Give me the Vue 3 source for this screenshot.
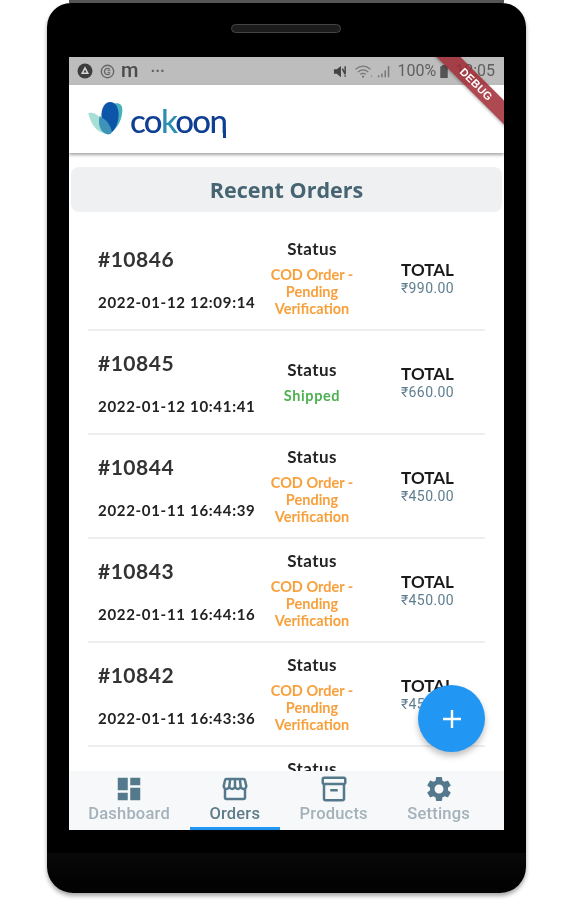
<script setup>
const orders = [
  { id: '#10846', date: '2022-01-12 12:09:14', total: '₹990.00', cod: true },
  { id: '#10845', date: '2022-01-12 10:41:41', total: '₹660.00', cod: false },
  { id: '#10844', date: '2022-01-11 16:44:39', total: '₹450.00', cod: true },
  { id: '#10843', date: '2022-01-11 16:44:16', total: '₹450.00', cod: true },
  { id: '#10842', date: '2022-01-11 16:43:36', total: '₹450.00', cod: true },
  { id: '#10841', date: '2022-01-11 16:40:12', total: '₹450.00', cod: true }
]
const tabs = [
  { label: 'Dashboard', active: false, d: 'M3 13h8V3H3v10zm0 8h8v-6H3v6zm10 0h8V11h-8v10zm0-18v6h8V3h-8z' },
  { label: 'Orders', active: true, d: 'M21.9 8.89l-1.05-4.37c-.22-.9-1-1.52-1.91-1.52H5.05c-.9 0-1.69.63-1.9 1.52L2.1 8.89c-.24 1.02-.02 2.06.62 2.88.08.11.19.19.28.29V19c0 1.1.9 2 2 2h14c1.1 0 2-.9 2-2v-6.94c.09-.09.2-.18.28-.28.64-.82.87-1.87.62-2.89zm-2.99-3.9l1.05 4.37c.1.42.01.84-.25 1.17-.14.18-.44.47-.94.47-.61 0-1.14-.49-1.21-1.14L16.98 5l1.93-.01zM13 5h1.96l.54 4.52c.05.39-.07.78-.33 1.07-.22.26-.54.41-.95.41-.67 0-1.22-.59-1.22-1.31V5zM8.49 9.52L9.04 5H11v4.69c0 .72-.55 1.31-1.29 1.31-.34 0-.65-.15-.89-.41-.25-.29-.37-.68-.33-1.07zm-4.45-.16L5.05 5h1.97l-.58 4.86c-.08.65-.6 1.14-1.21 1.14-.49 0-.8-.29-.93-.47-.27-.32-.36-.75-.26-1.17zM5 19v-6.03c.08.01.15.03.23.03.87 0 1.66-.36 2.24-.95.6.6 1.4.95 2.31.95.87 0 1.65-.36 2.23-.93.59.57 1.39.93 2.29.93.84 0 1.64-.35 2.24-.95.58.59 1.37.95 2.24.95.08 0 .15-.02.23-.03V19H5z' },
  { label: 'Products', active: false, d: 'M20 2H4c-1 0-2 .9-2 2v3.01c0 .72.43 1.34 1 1.69V20c0 1.1 1.1 2 2 2h14c.9 0 2-.9 2-2V8.7c.57-.35 1-.97 1-1.69V4c0-1.1-1-2-2-2zm-1 18H5V9h14v11zm1-13H4V4h16v3zM9 12h6v2H9z' },
  { label: 'Settings', active: false, d: 'M19.14 12.94c.04-.3.06-.61.06-.94 0-.32-.02-.64-.07-.94l2.03-1.58c.18-.14.23-.41.12-.61l-1.92-3.32c-.12-.22-.37-.29-.59-.22l-2.39.96c-.5-.38-1.03-.7-1.62-.94l-.36-2.54c-.04-.24-.24-.41-.48-.41h-3.84c-.24 0-.43.17-.47.41l-.36 2.54c-.59.24-1.13.57-1.62.94l-2.39-.96c-.22-.08-.47 0-.59.22L2.74 8.87c-.12.21-.08.47.12.61l2.03 1.58c-.05.3-.09.63-.09.94s.02.64.07.94l-2.03 1.58c-.18.14-.23.41-.12.61l1.92 3.32c.12.22.37.29.59.22l2.39-.96c.5.38 1.03.7 1.62.94l.36 2.54c.05.24.24.41.48.41h3.84c.24 0 .44-.17.47-.41l.36-2.54c.59-.24 1.13-.56 1.62-.94l2.39.96c.22.08.47 0 .59-.22l1.92-3.32c.12-.22.07-.47-.12-.61l-2.01-1.58zM12 15.6c-1.98 0-3.6-1.62-3.6-3.6s1.62-3.6 3.6-3.6 3.6 1.62 3.6 3.6-1.62 3.6-3.6 3.6z' }
]
</script>

<template>
  <div class="page">
    <div class="phone">
      <div class="speaker"></div>
      <div class="screen">
        <div class="statusbar">
          <div class="st-left">
            <svg class="st-icon" viewBox="0 0 16 16" width="16" height="16">
              <circle cx="8" cy="8" r="7.5" fill="#3d3d3d" />
              <path d="M8 3.2 12 11H4z" fill="#d8d8d8" />
              <path d="M8 6.4 9.6 9.6H6.4z" fill="#3d3d3d" />
            </svg>
            <svg class="st-icon" viewBox="0 0 16 16" width="15" height="15">
              <circle cx="8" cy="8" r="6.6" fill="none" stroke="#666" stroke-width="1.5" />
              <path d="M10.6 5.6a3.4 3.4 0 1 0 0 4.8" fill="none" stroke="#666" stroke-width="1.4" />
              <path d="M8 7h3M8 9h3" stroke="#666" stroke-width="1" />
            </svg>
            <span class="st-m">m</span>
            <span class="st-dots">···</span>
          </div>
          <div class="st-right">
            <svg viewBox="0 0 16 16" width="15" height="15">
              <path d="M1 5.5h3L8.5 2v12L4 10.5H1z" fill="#444" />
              <path d="M10 5l3 6M13 2.5v7.5M13 12v1.5" stroke="#444" stroke-width="1.6" />
            </svg>
            <svg class="st-wifi" viewBox="0 0 20 16" width="20" height="15">
              <path d="M1 5.5c5-4 11-4 16 0M3.5 8.5c3.5-2.8 7.5-2.8 11 0M6 11c2-1.4 4-1.4 6 0" fill="none" stroke="#777" stroke-width="1.3" />
              <circle cx="9" cy="13.5" r="1.2" fill="#777" />
              <circle cx="18" cy="13" r=".8" fill="#888" />
            </svg>
            <svg viewBox="0 0 16 16" width="15" height="15">
              <path d="M1 12h1.6v2H1zM4.5 10h1.6v4H4.5zM8 7h1.6v7H8zM11.5 2h1.6v12h-1.6z" fill="#777" />
            </svg>
            <span class="st-text">100%</span>
            <svg viewBox="0 0 10 16" width="10" height="15">
              <path d="M3 1h4v1.5h2V15H1V2.5h2z" fill="#555" />
            </svg>
            <span class="st-text st-time">12:05</span>
          </div>
        </div>

        <div class="banner">DEBUG</div>

        <header class="appbar">
          <div class="logo">
            <svg class="logo-mark" viewBox="0 0 46 36" width="44" height="34">
              <path d="M1 13c7-2 12 3 15 10 2 5 4 9 7 11C12 36 4 26 1 13z" fill="#a7dfd6" />
              <path d="M27 4c7-4 11 0 10 8-1 10-6 18-13 22 6-8 8-20 3-30z" fill="#45b1bb" />
              <path d="M24 1c7 0 10 8 9 17-1 7-4 13-7 15-5-3-11-9-11-18 0-8 4-14 9-14z" fill="#0d55a8" />
              <path d="M13 16c6 3 12 9 13 17-1 2-3 3-6 2-6-2-9-10-7-19z" fill="#3d93b8" />
            </svg>
            <span class="logo-text">co<span class="logo-k">k</span>oo<span class="logo-n">n</span></span>
          </div>
        </header>

        <div class="title-card">Recent Orders</div>

        <div class="list">
          <div v-for="o in orders" :key="o.id" class="row">
            <div class="col-id">
              <div class="order-id">{{ o.id }}</div>
              <div class="order-date">{{ o.date }}</div>
            </div>
            <div class="col-status">
              <div class="status-label">Status</div>
              <div v-if="o.cod" class="status-value cod">COD Order -<br />Pending<br />Verification</div>
              <div v-else class="status-value shipped">Shipped</div>
            </div>
            <div class="col-total">
              <div class="total-label">TOTAL</div>
              <div class="total-value">{{ o.total }}</div>
            </div>
          </div>
        </div>

        <nav class="tabs">
          <div v-for="t in tabs" :key="t.label" class="tab" :class="{ active: t.active }">
            <svg viewBox="0 0 24 24" width="30" height="30"><path :d="t.d" fill="#55798c" /></svg>
            <span class="tab-label">{{ t.label }}</span>
          </div>
        </nav>

        <button class="fab" aria-label="Add">
          <svg viewBox="0 0 24 24" width="24" height="24"><path d="M12 3v18M3 12h18" stroke="#fff" stroke-width="2.4" /></svg>
        </button>
      </div>
    </div>
  </div>
</template>

<style>
html, body { margin: 0; background: #fff; }
</style>

<style scoped>
.page {
  width: 571px;
  height: 900px;
  background: #fff;
  overflow: hidden;
  font-family: "Lato", "Liberation Sans", sans-serif;
  padding: 3px 0 0 47px;
  box-sizing: border-box;
}
.phone {
  width: 479px;
  height: 890px;
  box-sizing: border-box;
  padding: 54px 22px 63px;
  background: linear-gradient(#000 0 850px, #090909 850px, #020202 880px);
  border-radius: 24px 24px 26px 26px;
  box-shadow: 0 3px 4px rgba(0,0,0,.35);
  position: relative;
  filter: blur(0.45px);
}
.phone::before {
  content: "";
  position: absolute;
  left: 22px;
  right: 22px;
  top: -3px;
  height: 3px;
  background: #555;
}
.speaker {
  position: absolute;
  left: 184px;
  top: 21px;
  width: 110px;
  height: 9px;
  border-radius: 5px;
  background: #1c1c1c;
  border: 1px solid #444;
  box-sizing: border-box;
}
.screen {
  position: relative;
  height: 773px;
  background: #fff;
  overflow: hidden;
  display: flex;
  flex-direction: column;
}
.statusbar {
  flex: none;
  height: 28px;
  background: #bdbdbd;
  display: flex;
  align-items: center;
  justify-content: space-between;
  padding: 0 9px 0 8px;
}
.st-left, .st-right { display: flex; align-items: center; }
.st-left { gap: 7px; }
.st-m { font: 500 20px/1 "Roboto", sans-serif; color: #4a4a4a; margin: -2px 0 0 -1px; }
.st-dots { font: 700 16px/1 "Roboto", sans-serif; color: #666; margin-left: 5px; }
.st-right { gap: 3px; }
.st-wifi { margin-left: 3px; }
.st-text { font: 400 16px/1 "Roboto", sans-serif; color: #5f5f5f; margin-left: 2px; }
.st-time { margin-left: 3px; }
.banner {
  position: absolute;
  left: 347px;
  top: 19px;
  width: 120px;
  height: 17px;
  transform: rotate(45deg);
  background: rgba(160, 40, 50, .85);
  color: #fff;
  font: 700 11px/17px "Liberation Sans", sans-serif;
  text-align: center;
  letter-spacing: .3px;
  box-shadow: 0 1px 3px rgba(0,0,0,.3);
  z-index: 3;
}
.appbar {
  flex: none;
  height: 68px;
  box-sizing: border-box;
  padding-left: 18px;
  box-shadow: 0 2px 3px rgba(0,0,0,.35);
  display: flex;
  align-items: center;
  position: relative;
  z-index: 1;
}
.logo { display: flex; align-items: flex-end; margin-top: -2px; }
.logo-mark { display: block; margin-right: -1px; }
.logo-text {
  font: 500 33px/30px "Lato", sans-serif;
  color: #0f3f92;
  letter-spacing: -1.7px;
}
.logo-k { color: #2a8fb0; }
.logo-n { position: relative; }
.logo-n::after {
  content: "";
  position: absolute;
  right: .5px;
  bottom: 2px;
  width: 2.5px;
  height: 8px;
  background: #0f3f92;
}
.title-card {
  flex: none;
  margin: 14px 2px 15px;
  height: 45px;
  border-radius: 8px;
  background: #eef0f2;
  color: #476472;
  font: 700 21.5px/45px "Open Sans", sans-serif;
  text-align: center;
}
.list {
  flex: 1;
  min-height: 0;
  overflow: hidden;
  padding: 0 19px;
}
.row {
  height: 104px;
  box-sizing: border-box;
  border-bottom: 2px solid #eeeeee;
  display: flex;
  align-items: center;
  color: #1f1f1f;
}
.col-id { width: 167px; box-sizing: border-box; padding-left: 10px; flex: none; }
.order-id { font-size: 21px; line-height: 26px; font-weight: 700; letter-spacing: .5px; color: #333; }
.order-date { font-size: 15px; line-height: 18px; font-weight: 700; margin-top: 21px; letter-spacing: .69px; white-space: nowrap; color: #222; }
.col-status { width: 114px; padding-top: 1px; text-align: center; flex: none; }
.status-label { font-size: 17px; line-height: 18px; font-weight: 700; letter-spacing: .4px; color: #222; margin-bottom: 8px; }
.status-value { font-size: 14.5px; line-height: 17px; font-weight: 700; }
.cod { color: #f7a03c; }
.shipped { color: #4cb050; letter-spacing: .6px; }
.col-total { width: 115px; padding-top: 1px; text-align: center; flex: none; margin-left: 1px; }
.total-label { font-size: 17px; line-height: 18px; font-weight: 700; color: #1a1a1a; }
.total-value { font: 400 14px/18px "Roboto", sans-serif; color: #5f7f90; letter-spacing: .4px; }
.tabs {
  flex: none;
  height: 59px;
  background: #f7f8f9;
  display: flex;
  position: relative;
  z-index: 1;
}
.tab {
  box-sizing: border-box;
  padding: 3px 19.75px 0;
  height: 59px;
  display: flex;
  flex-direction: column;
  align-items: center;
  border-bottom: 3px solid transparent;
}
.tab:first-child { margin-left: -.5px; }
.tab.active { border-bottom-color: #2196f3; }
.tab-label { font: 500 16.5px/20px "Roboto", sans-serif; color: #a3b2ba; letter-spacing: .2px; white-space: nowrap; }
.tab.active .tab-label { color: #5f7c8a; }
.fab {
  position: absolute;
  left: 349px;
  top: 628px;
  width: 67px;
  height: 67px;
  border: 0;
  padding: 0;
  border-radius: 50%;
  background: #2196f3;
  box-shadow: 0 4px 6px rgba(0,0,0,.25);
  display: flex;
  align-items: center;
  justify-content: center;
  z-index: 2;
}
</style>
